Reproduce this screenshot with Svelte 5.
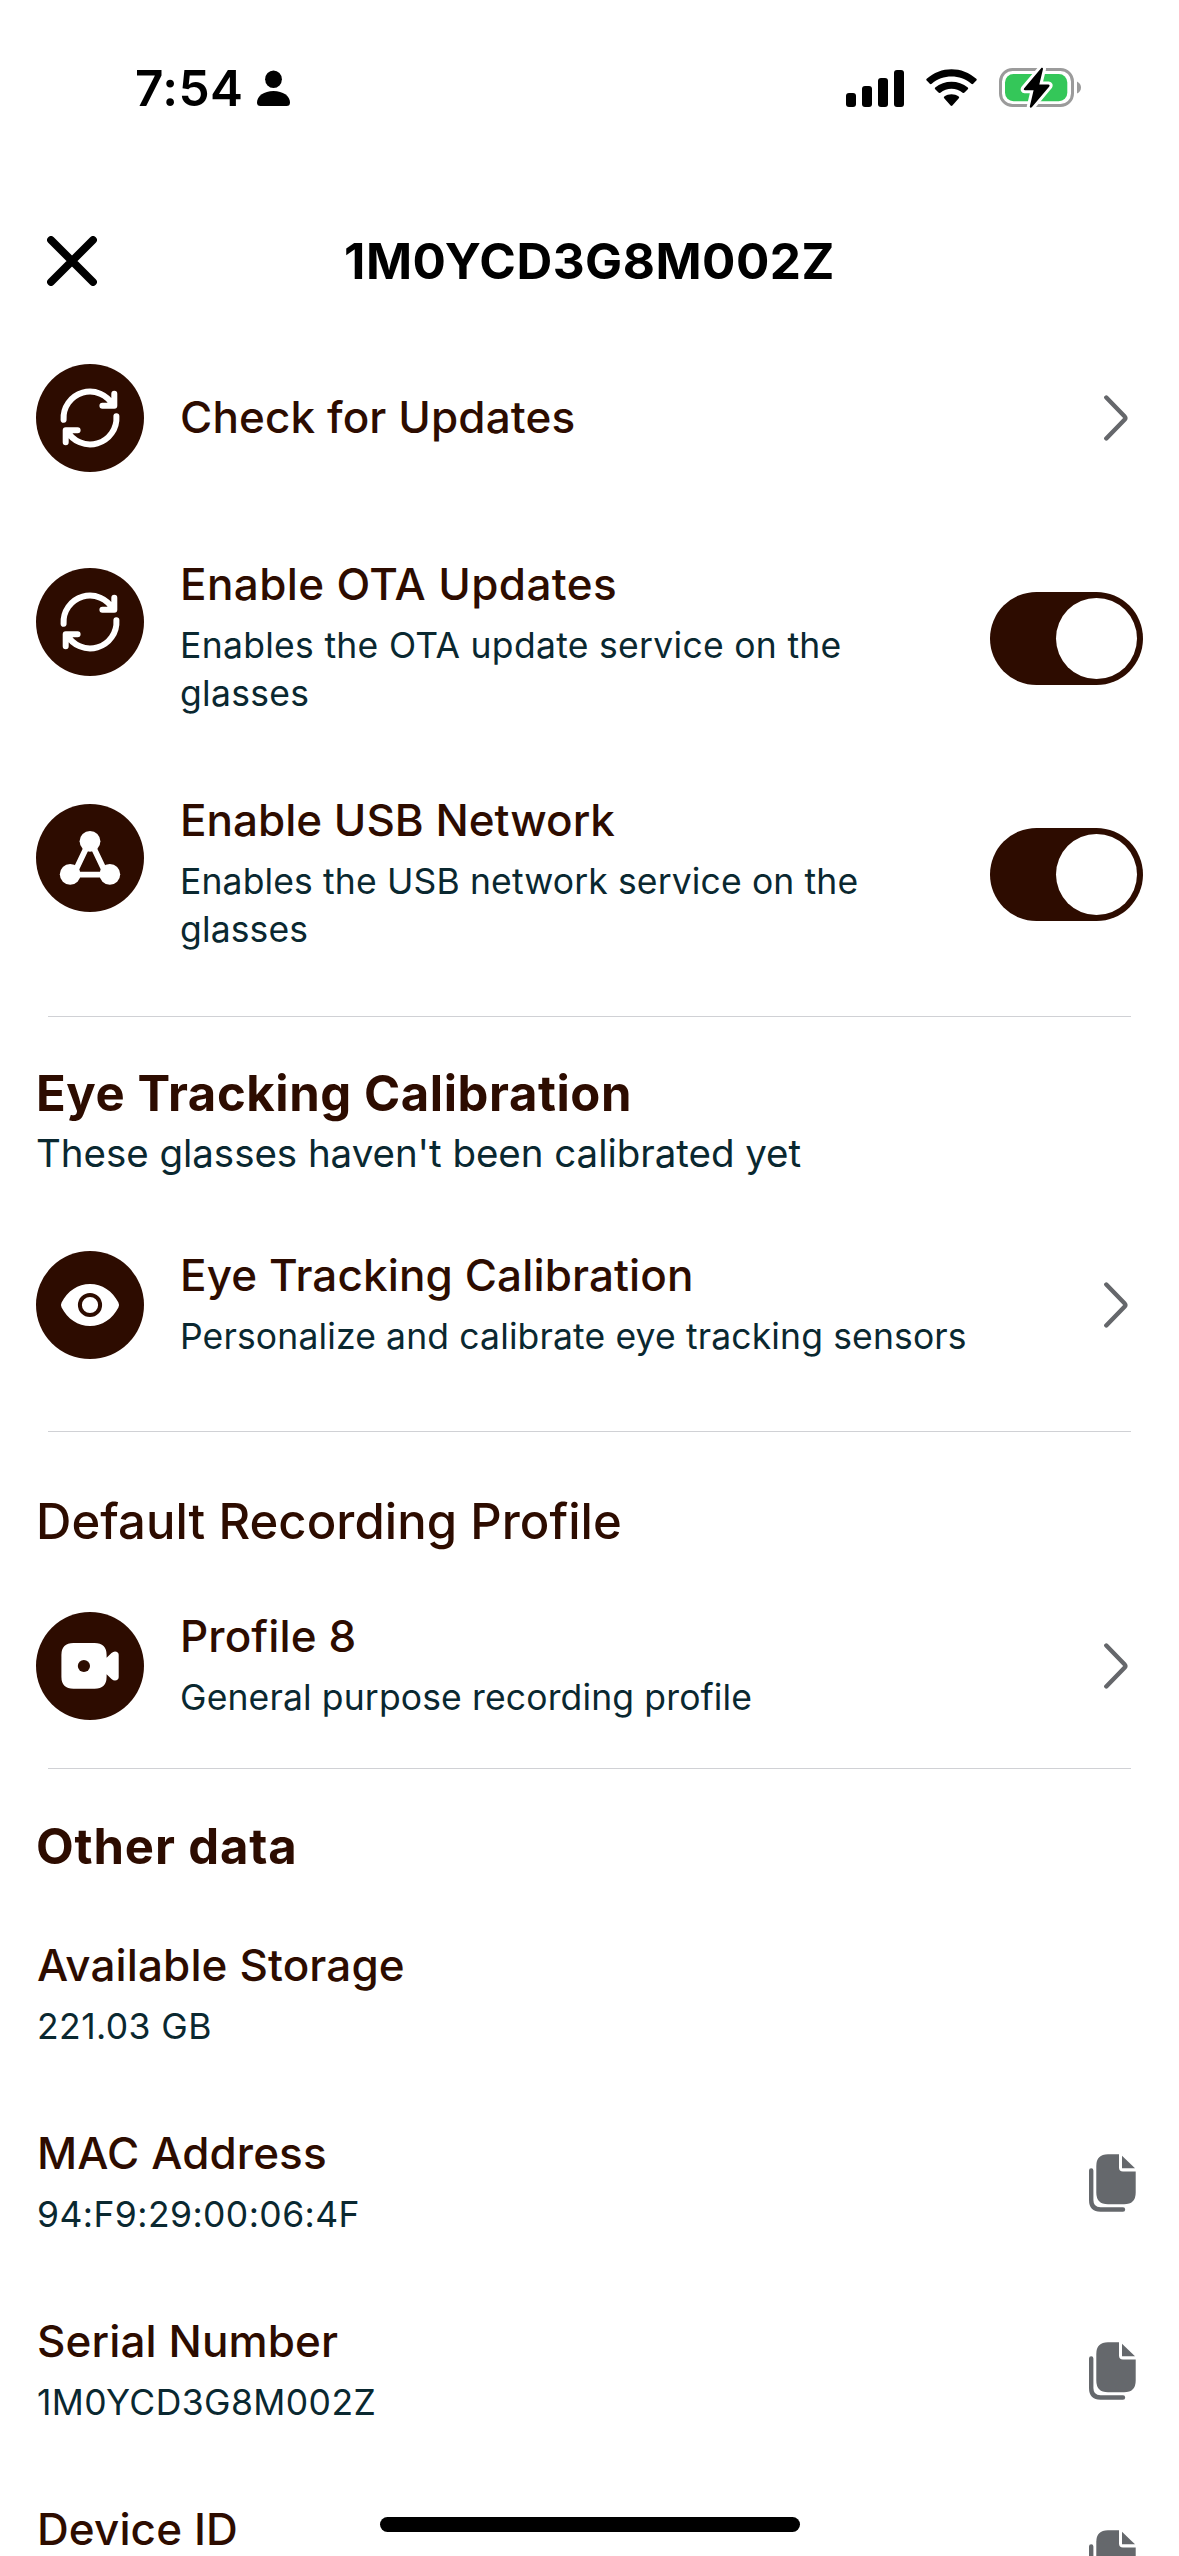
<script>
  const data = [
    { title: 'Available Storage', value: '221.03 GB', copy: false },
    { title: 'MAC Address', value: '94:F9:29:00:06:4F', copy: true },
    { title: 'Serial Number', value: '1M0YCD3G8M002Z', copy: true },
    { title: 'Device ID', value: '', copy: true }
  ];
</script>

{#snippet badge(name)}
  <svg class="badge" viewBox="0 0 108 108" aria-hidden="true">
    <circle cx="54" cy="54" r="54" fill="#2d0c00" />
    {#if name === 'sync'}
      <g fill="none" stroke="#fff" stroke-width="6" stroke-linecap="round" stroke-linejoin="round">
        <path d="M27.6 55.8A26.4 26.4 0 0 1 77.2 41.5M78.3 29.8V41.7H66.4" />
        <path d="M80.4 52.2A26.4 26.4 0 0 1 30.8 66.5M29.7 78.2V66.3H41.6" />
      </g>
    {:else if name === 'network'}
      <g fill="#fff" stroke="#fff">
        <path d="M50 44.500L40.500 64.500M58 44.500L67.500 64.500M38 70.700H70" fill="none" stroke-width="5.800" />
        <circle cx="54" cy="37.300" r="10.400" stroke="none" />
        <circle cx="34.200" cy="70.300" r="10.400" stroke="none" />
        <circle cx="73.800" cy="70.300" r="10.400" stroke="none" />
      </g>
    {:else if name === 'eye'}
      <path d="M25.600 51.500C31.500 40 42 33 54 33S76.500 40 82.400 51.500Q83.700 54 82.400 56.500C76.500 68 66 75 54 75S31.500 68 25.600 56.500Q24.300 54 25.600 51.500Z" fill="#fff" />
      <circle cx="54" cy="54" r="10.100" fill="none" stroke="#2d0c00" stroke-width="4" />
    {:else}
      <path d="M37.500 31H58.500Q70.600 31 70.600 43V45.800L75.500 41Q79 38 82 40.800Q82.700 41.600 82.700 43V65Q82.700 66.400 82 67.200Q79 70 75.500 67L70.600 62.200V64.800Q70.600 76.800 58.500 76.800H37.500Q25.400 76.800 25.400 64.800V43Q25.400 31 37.500 31Z" fill="#fff" />
      <circle cx="47.900" cy="54" r="6.100" fill="#2d0c00" />
    {/if}
  </svg>
{/snippet}

{#snippet chevron()}
  <svg class="chevron" viewBox="0 0 24 46" aria-hidden="true">
    <path d="M2.300 2.500L20.500 21.200Q22.200 23 20.500 24.800L2.300 43.500" fill="none" stroke="#65676b" stroke-width="4.400" stroke-linecap="round" stroke-linejoin="round" />
  </svg>
{/snippet}

{#snippet toggle()}
  <span class="toggle"><span class="knob"></span></span>
{/snippet}

<div class="screen">
  <div class="status">
    <span class="time">7:54</span>
    <svg class="person" width="33" height="36" viewBox="0 0 33 36" aria-hidden="true">
      <ellipse cx="16.500" cy="9.200" rx="8.400" ry="8.800" />
      <path d="M0 32.500C0 26 7 21 16.500 21S33 26 33 32.500Q33 36 29.500 36H3.500Q0 36 0 32.500Z" />
    </svg>
    <svg class="signal" width="58" height="37" viewBox="0 0 58 37" aria-hidden="true">
      <rect x="0" y="23" width="10" height="14" rx="3" />
      <rect x="16" y="16" width="10" height="21" rx="3" />
      <rect x="32" y="8" width="10" height="29" rx="3" />
      <rect x="48" y="0" width="10" height="37" rx="3" />
    </svg>
    <svg class="wifi" width="51" height="38" viewBox="0 0 51 38" aria-hidden="true">
      <path d="M.7 11.600Q-.2 10.700.7 9.800C14.500-3.100 36.500-3.100 50.300 9.800Q51.200 10.700 50.300 11.600L47.200 14.700Q46.300 15.600 45.300 14.700C34.200 5 16.800 5 5.700 14.700Q4.700 15.600 3.800 14.700Z" />
      <path d="M9.200 20.300Q8.300 19.400 9.200 18.500C18.200 10.800 32.800 10.800 41.800 18.500Q42.700 19.400 41.800 20.300L38.500 23.600Q37.600 24.500 36.600 23.700C30.300 18.400 20.700 18.400 14.400 23.700Q13.400 24.500 12.500 23.600Z" />
      <path d="M18.200 29.200Q17.300 28.300 18.300 27.500C22.500 24.400 28.500 24.400 32.700 27.500Q33.700 28.300 32.800 29.200L26.400 36.600Q25.500 37.500 24.600 36.600Z" />
    </svg>
    <svg class="battery" width="83" height="42" viewBox="0 0 83 42" aria-hidden="true">
      <rect x="1.500" y="2.500" width="72" height="36" rx="12" fill="none" stroke="#9b9b9b" stroke-width="3" />
      <path d="M78 14.500Q82 16.500 82 20.500T78 26.500Z" fill="#9b9b9b" />
      <rect x="6" y="7" width="62.300" height="27.300" rx="8.500" fill="#34c759" />
      <path d="M42.500.8L25 21.500Q24 23 26 23.300H34.600L30.800 39.500Q31 41.500 32.800 40.300L50.300 19.400Q51.300 17.800 49.400 17.500H40.300L44 2Q44 .3 42.500.8Z" stroke="#fff" stroke-width="6" stroke-linejoin="round" fill="#fff" />
      <path d="M42.500.8L25 21.500Q24 23 26 23.300H34.600L30.800 39.500Q31 41.500 32.800 40.300L50.300 19.400Q51.300 17.800 49.400 17.500H40.300L44 2Q44 .3 42.500.8Z" />
    </svg>
  </div>

  <header>
    <svg class="close" width="50" height="50" viewBox="0 0 50 50" aria-hidden="true">
      <path d="M4 4L46 46M46 4L4 46" stroke="#000" stroke-width="7.800" stroke-linecap="round" />
    </svg>
    <h1>1M0YCD3G8M002Z</h1>
  </header>

  <main>
    <div class="row single">
      {@render badge('sync')}
      <div class="text"><div class="title">Check for Updates</div></div>
      {@render chevron()}
    </div>
    <div class="row setting ota">
      {@render badge('sync')}
      <div class="text">
        <div class="title">Enable OTA Updates</div>
        <p>Enables the OTA update service on the glasses</p>
      </div>
      {@render toggle()}
    </div>
    <div class="row setting usb">
      {@render badge('network')}
      <div class="text">
        <div class="title">Enable USB Network</div>
        <p>Enables the USB network service on the glasses</p>
      </div>
      {@render toggle()}
    </div>
    <hr class="after-settings" />

    <h2 class="calibration">Eye Tracking Calibration</h2>
    <p class="note">These glasses haven't been calibrated yet</p>
    <div class="row eye-row">
      {@render badge('eye')}
      <div class="text">
        <div class="title">Eye Tracking Calibration</div>
        <p>Personalize and calibrate eye tracking sensors</p>
      </div>
      {@render chevron()}
    </div>
    <hr class="after-eye" />

    <h2 class="recording">Default Recording Profile</h2>
    <div class="row profile-row">
      {@render badge('video')}
      <div class="text">
        <div class="title">Profile 8</div>
        <p>General purpose recording profile</p>
      </div>
      {@render chevron()}
    </div>
    <hr class="after-profile" />

    <h2 class="other">Other data</h2>
    <div class="data">
      {#each data as item}
        <div class="datum">
          <div class="text">
            <div class="title">{item.title}</div>
            {#if item.value}<p>{item.value}</p>{/if}
          </div>
          {#if item.copy}
            <svg class="copy" width="47" height="58" viewBox="0 0 47 58" aria-hidden="true">
              <path d="M2.200 16.500V46Q2.200 55.500 11.500 55.500H34" fill="none" stroke="#65686c" stroke-width="4.400" stroke-linecap="round" />
              <path d="M19 .3H30V13.500Q30 17.600 34 17.600H46.700V38.500Q46.700 50.300 35 50.300H19Q7.300 50.300 7.300 38.500V12Q7.300.3 19 .3Z" fill="#65686c" />
              <path d="M33 1.800L46 14.300H33Z" fill="#65686c" />
            </svg>
          {/if}
        </div>
      {/each}
    </div>
  </main>
  <div class="home"></div>
</div>

<style>
  :global(body) { margin: 0; background: #fff; }
  .screen {
    position: relative;
    width: 1179px;
    height: 2556px;
    overflow: hidden;
    background: #fff;
    color: #2d0c00;
    font-family: Inter, "Liberation Sans", sans-serif;
    font-kerning: normal;
  }
  svg { display: block; flex: none; }
  h1, h2, p { margin: 0; }
  .status {
    display: flex;
    align-items: center;
    height: 176px;
    padding-left: 135px;
    color: #000;
  }
  .time { width: 122px; font-size: 49.5px; font-weight: 600; letter-spacing: 0.4px; }
  .person { margin-right: 556px; }
  .signal { margin-right: 22px; }
  .wifi { margin-right: 22px; }
  header {
    display: grid;
    grid-template-columns: 50px 1fr 50px;
    align-items: center;
    height: 170px;
    padding: 0 47px;
    color: #000;
  }
  h1 {
    text-align: center;
    font-size: 49.5px;
    font-weight: 700;
    line-height: 60px;
    letter-spacing: 0.5px;
    white-space: nowrap;
  }
  main { display: flex; flex-direction: column; }
  .row { display: flex; align-items: flex-start; padding: 0 36px; gap: 36px; }
  .text { flex: 1; min-width: 0; }
  .title {
    font-size: 44px;
    font-weight: 500;
    line-height: 58px;
    letter-spacing: 0.12px;
    white-space: nowrap;
  }
  .text p {
    margin-top: 9px;
    font-size: 35.5px;
    line-height: 48px;
    letter-spacing: 0.14px;
    color: #0a2830;
  }
  .badge { width: 108px; height: 108px; }
  .chevron { width: 24px; height: 46px; margin-right: 15px; }
  .single { height: 144px; align-items: center; }
  .single .title { padding-bottom: 2px; }
  .setting { height: 162px; }
  .setting p { max-width: 700px; }
  .ota { margin-top: 65px; }
  .ota .title { letter-spacing: 0.38px; }
  .ota p { letter-spacing: 0.3px; }
  .usb { margin-top: 74px; }
  .usb .title { letter-spacing: 0; }
  .setting .badge { margin-top: 13px; }
  .eye-row { height: 114px; margin-top: 67px; }
  .profile-row { height: 114px; margin-top: 55px; }
  .eye-row .badge, .profile-row .badge { margin-top: 5px; }
  .eye-row .chevron, .profile-row .chevron { margin-top: 36px; }
  .toggle {
    display: flex;
    flex: none;
    justify-content: flex-end;
    box-sizing: border-box;
    width: 153px;
    height: 93px;
    margin-top: 37px;
    padding: 6px;
    border-radius: 47px;
    background: #2d0c00;
  }
  .knob { width: 81px; height: 81px; border-radius: 50%; background: #fff; }
  hr { width: 1083px; height: 1px; margin: 0 48px; border: 0; background: #d0d1d5; }
  .after-settings { margin-top: 63px; }
  .after-eye { margin-top: 71px; }
  .after-profile { margin-top: 47px; }
  h2 { padding-left: 36px; font-size: 49px; font-weight: 700; line-height: 60px; white-space: nowrap; }
  .calibration { margin-top: 47px; letter-spacing: 0.58px; }
  .recording { margin-top: 60px; font-weight: 500; letter-spacing: 0.05px; }
  .other { margin-top: 48px; letter-spacing: 0.85px; }
  .note {
    margin-top: 3px;
    padding-left: 36px;
    font-size: 38.5px;
    line-height: 52px;
    letter-spacing: -0.04px;
    color: #0a2830;
  }
  .data { display: flex; flex-direction: column; gap: 73px; margin-top: 59px; padding: 0 43px 0 37px; }
  .datum { display: flex; align-items: flex-start; }
  .datum p { letter-spacing: 0.42px; }
  .copy { margin-top: 30px; }
  .home {
    position: absolute;
    left: 380px;
    bottom: 24px;
    width: 420px;
    height: 15px;
    border-radius: 8px;
    background: #000;
  }
</style>
